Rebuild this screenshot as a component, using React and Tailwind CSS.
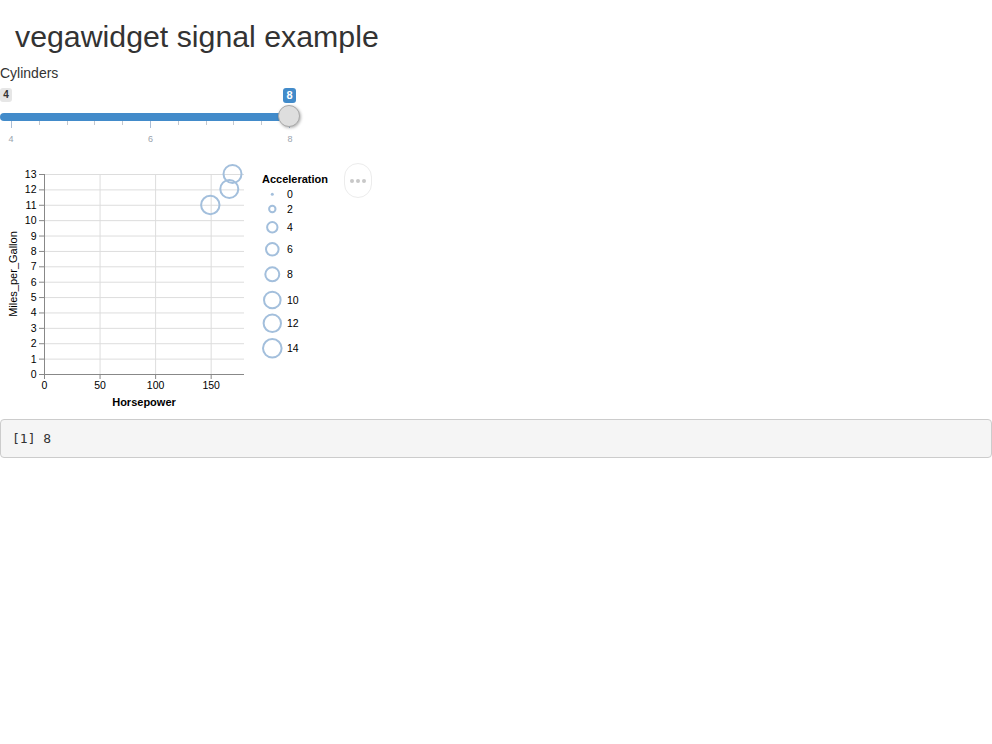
import React from "react";

const yTicks = Array.from({ length: 14 }, (_, i) => i);
const xTicks = [0, 50, 100, 150];
const X0 = 44;
const Y0 = 214; // svg coords (page y 374)
const sx = (v) => X0 + (v / 180) * 200;
const sy = (v) => Y0 - (v / 13) * 200;
const PT = "#a3bfdc";

const legend = [
  { label: "0", y: 34.3, r: 1.5, dot: true },
  { label: "2", y: 49, r: 3.2 },
  { label: "4", y: 67.3, r: 5.2 },
  { label: "6", y: 89.3, r: 6.3 },
  { label: "8", y: 114.3, r: 7 },
  { label: "10", y: 140, r: 8.3 },
  { label: "12", y: 163.3, r: 8.7 },
  { label: "14", y: 188.3, r: 9.3 },
];

const points = [
  { x: 210.3, y: 45, r: 9.2 },
  { x: 229.3, y: 29, r: 9 },
  { x: 232.5, y: 14, r: 9 },
];

function Chart() {
  const font = "'Liberation Sans', Arial, sans-serif";
  return (
    <svg width="340" height="252" viewBox="0 0 340 252" style={{ fontFamily: font }}>
      {yTicks.map((t) => (
        <line key={"gy" + t} x1={X0} x2={244} y1={sy(t) + 0.5} y2={sy(t) + 0.5} stroke="#ddd" strokeWidth="1" />
      ))}
      {xTicks.map((t) => (
        <line key={"gx" + t} x1={sx(t) + 0.5} x2={sx(t) + 0.5} y1={14} y2={Y0} stroke="#ddd" strokeWidth="1" />
      ))}
      <line x1={X0 + 0.5} x2={X0 + 0.5} y1={14} y2={Y0 + 0.5} stroke="#888" strokeWidth="1" />
      {yTicks.map((t) => (
        <g key={"yt" + t}>
          <line x1={39} x2={X0} y1={sy(t) + 0.5} y2={sy(t) + 0.5} stroke="#888" strokeWidth="1" />
          <text x={36.5} y={sy(t) + 4} fontSize="10.5" textAnchor="end" fill="#000">
            {t}
          </text>
        </g>
      ))}
      <text transform={`translate(16.5,114) rotate(-90)`} fontSize="11" textAnchor="middle" fill="#000">
        Miles_per_Gallon
      </text>
      <line x1={X0} x2={244} y1={Y0 + 0.5} y2={Y0 + 0.5} stroke="#888" strokeWidth="1" />
      {xTicks.map((t) => (
        <g key={"xt" + t}>
          <line x1={sx(t) + 0.5} x2={sx(t) + 0.5} y1={Y0} y2={Y0 + 5} stroke="#888" strokeWidth="1" />
          <text x={sx(t) + 0.5} y={Y0 + 15} fontSize="10.5" textAnchor="middle" fill="#000">
            {t}
          </text>
        </g>
      ))}
      <text x={144} y={246} fontSize="11" fontWeight="bold" textAnchor="middle" fill="#000">
        Horsepower
      </text>
      {points.map((p, i) => (
        <circle key={i} cx={p.x} cy={p.y} r={p.r} fill="none" stroke={PT} strokeWidth="2" />
      ))}
      <text x={262} y={23} fontSize="11" fontWeight="bold" fill="#000">
        Acceleration
      </text>
      {legend.map((l) => (
        <g key={l.label}>
          {l.dot ? (
            <circle cx={272.3} cy={l.y} r={l.r} fill={PT} />
          ) : (
            <circle cx={272.3} cy={l.y} r={l.r} fill="none" stroke={PT} strokeWidth="2" />
          )}
          <text x={287} y={l.y + 4} fontSize="10.5" fill="#000">
            {l.label}
          </text>
        </g>
      ))}
    </svg>
  );
}

function Slider() {
  const ticks = Array.from({ length: 11 }, (_, i) => i);
  return (
    <div className="flex w-[300px] flex-col pt-[5px]">
      <div className="flex w-[296px] items-start justify-between">
        <div className="flex h-[14px] w-[12px] items-center justify-center rounded-[3px] bg-[#e6e6e6] text-[10px] font-bold leading-none text-[#333]">
          4
        </div>
        <div className="flex h-[15px] w-[13px] items-center justify-center rounded-[3px] bg-[#428bca] text-[11px] font-bold leading-none text-white">
          8
        </div>
      </div>
      <div className="relative mt-[10px] h-[8px] w-[292px] rounded-l-full bg-[#428bca]">
        <div className="absolute -top-[8px] right-[-8px] h-[22px] w-[22px] rounded-full border border-[#a9a9a9] bg-[#dedede] shadow-[1px_1px_3px_rgba(0,0,0,0.3)]" />
      </div>
      <div className="ml-[11px] flex w-[279px] items-start justify-between">
        {ticks.map((i) =>
          i % 5 === 0 ? (
            <div key={i} className="h-[7px] w-px bg-[#a9bdd6]" />
          ) : (
            <div key={i} className="h-[4px] w-px bg-[#c4c8cf]" />
          )
        )}
      </div>
      <div className="ml-[1px] mt-[5px] flex w-[299px] justify-between text-center text-[9px] leading-[12px] text-[#9aa3ad]">
        <span className="w-[20px]">4</span>
        <span className="w-[20px]">6</span>
        <span className="w-[20px]">8</span>
      </div>
    </div>
  );
}

export default function App() {
  return (
    <div className="min-h-[744px] w-[992px] bg-white text-[#333]" style={{ fontFamily: "'Liberation Sans', Arial, sans-serif" }}>
      <h1 className="mb-[10px] mt-[20px] pl-[15px] text-[30.3px] font-normal leading-[33px] text-[#333]">
        vegawidget signal example
      </h1>
      <div className="text-[14px] leading-[20px] text-[#333]">Cylinders</div>
      <Slider />
      <div className="mt-[15px] flex items-start">
        <Chart />
        <div className="ml-[4px] mt-[3px] flex h-[35px] w-[28px] items-center justify-center gap-[2px] rounded-full border border-[#ececec] bg-white">
          <span className="h-[4px] w-[4px] rounded-full bg-[#c8c8c8]" />
          <span className="h-[4px] w-[4px] rounded-full bg-[#c8c8c8]" />
          <span className="h-[4px] w-[4px] rounded-full bg-[#c8c8c8]" />
        </div>
      </div>
      <div
        className="mt-[7px] h-[39px] w-[992px] rounded-[4px] border border-[#ccc] bg-[#f5f5f5] pl-[11px] pt-[9px] text-[13px] leading-[19px] text-[#333]"
        style={{ fontFamily: "'DejaVu Sans Mono', 'Liberation Mono', monospace" }}
      >
        [1] 8
      </div>
    </div>
  );
}
